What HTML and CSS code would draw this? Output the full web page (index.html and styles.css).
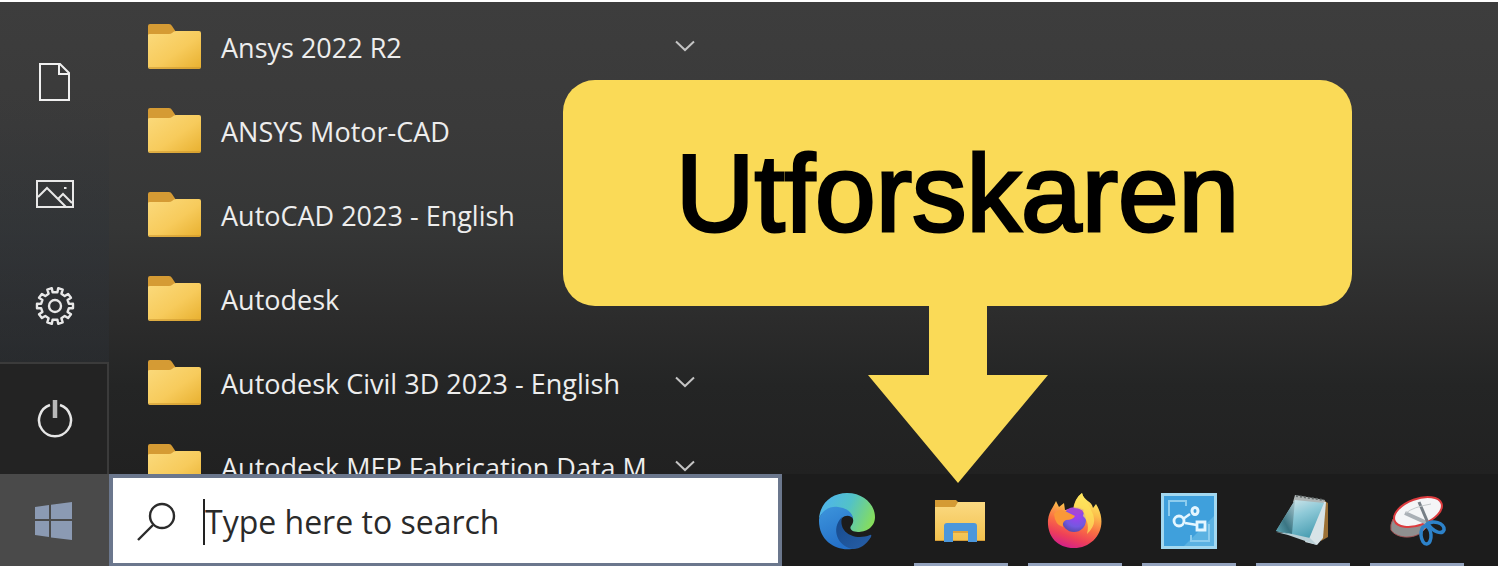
FILE: index.html
```
<!DOCTYPE html>
<html lang="sv">
<head>
<meta charset="utf-8">
<title>Utforskaren</title>
<link rel="stylesheet" href="styles.css">
</head>
<body>
<svg class="defs" aria-hidden="true">
  <defs>
    <linearGradient id="folderFace" x1="0" y1="0" x2="1" y2="1">
      <stop offset="0" stop-color="#fbda7c"/><stop offset=".55" stop-color="#f7cb5c"/><stop offset="1" stop-color="#e8b02f"/>
    </linearGradient>
    <symbol id="folder" viewBox="0 0 53 45">
      <path d="M2 0H21Q23 0 24 2L28 8V20H0V2Q0 0 2 0Z" fill="#d59b34"/>
      <path d="M0 11Q0 10 2 10H21Q23 10 24 9L26 7.500Q27 7 28 7H51Q53 7 53 9V43Q53 45 51 45H2Q0 45 0 43Z" fill="url(#folderFace)"/>
      <path d="M1 44H52" stroke="#c8922c" stroke-width="1.200"/>
    </symbol>
    <symbol id="chevron" viewBox="0 0 20 12">
      <path d="M1 1.500L10 10L19 1.500" fill="none" stroke="#c4c4c4" stroke-width="2"/>
    </symbol>
  </defs>
</svg>

<main class="desktop">
  <section class="menu">
    <nav class="rail" aria-label="Start">
      <button class="rail-item" aria-label="Documents">
        <svg width="40" height="40" viewBox="0 0 40 40" fill="none" stroke="#f0f0f0" stroke-width="2">
          <path d="M5 2H25L34 11V38H5Z"/><path d="M24 2V12H34"/>
        </svg>
      </button>
      <button class="rail-item" aria-label="Pictures">
        <svg width="40" height="40" viewBox="0 0 40 40" fill="none" stroke="#e8e8e8" stroke-width="2">
          <path d="M2 7H38V33H2Z"/><path d="M3 23L12 14L31 33M23 25L28 20L37 29"/><path d="M29 14H31.500"/>
        </svg>
      </button>
      <button class="rail-item" aria-label="Settings">
        <svg width="40" height="40" viewBox="0 0 40 40" fill="none" stroke="#e8e8e8" stroke-width="2.400" stroke-linejoin="round">
          <path d="M17.600 6.200L16.800 2.200L12.300 3.700L13.600 7.700L10.300 10.100L6.900 7.900L4 11.800L7.400 14.100L6.100 17.900L2 17.700V22.300L6.100 22.100L7.400 25.900L4 28.200L6.900 32.100L10.300 29.900L13.600 32.300L12.300 36.300L16.800 37.800L17.600 33.800H22.400L23.200 37.800L27.700 36.300L26.400 32.300L29.700 29.900L33.100 32.100L36 28.200L32.600 25.900L33.900 22.100L38 22.300V17.700L33.900 17.900L32.600 14.100L36 11.800L33.100 7.900L29.700 10.100L26.400 7.700L27.700 3.700L23.200 2.200L22.400 6.200Z"/>
          <circle cx="20" cy="20" r="6"/>
        </svg>
      </button>
      <button class="rail-item rail-power" aria-label="Power">
        <svg width="40" height="40" viewBox="0 0 40 40" fill="none" stroke="#e6e6e6" stroke-width="2.500">
          <path d="M16 6A16 16 0 1 0 26 6"/><path d="M21 1V19" stroke="#b8b8b8" stroke-width="4.500"/>
        </svg>
      </button>
    </nav>
    <ul class="apps">
      <li><button class="app"><svg class="app-icon"><use href="#folder"/></svg><span>Ansys 2022 R2</span><svg class="chevron"><use href="#chevron"/></svg></button></li>
      <li><button class="app"><svg class="app-icon"><use href="#folder"/></svg><span>ANSYS Motor-CAD</span></button></li>
      <li><button class="app"><svg class="app-icon"><use href="#folder"/></svg><span>AutoCAD 2023 - English</span></button></li>
      <li><button class="app"><svg class="app-icon"><use href="#folder"/></svg><span>Autodesk</span></button></li>
      <li><button class="app"><svg class="app-icon"><use href="#folder"/></svg><span>Autodesk Civil 3D 2023 - English</span><svg class="chevron"><use href="#chevron"/></svg></button></li>
      <li><button class="app"><svg class="app-icon"><use href="#folder"/></svg><span>Autodesk MEP Fabrication Data M</span><svg class="chevron"><use href="#chevron"/></svg></button></li>
    </ul>
  </section>

  <footer class="taskbar">
    <button class="start" aria-label="Start">
      <svg width="40" height="40" viewBox="0 0 40 40" fill="#8b9ab3">
        <path d="M0 6L14 4V18H0ZM16 3.700L37 1V18H16ZM0 20H14V36L0 34ZM16 20H37V39L16 36.500Z"/>
      </svg>
    </button>
    <label class="search">
      <svg width="40" height="40" viewBox="0 0 40 40" fill="none" stroke="#2b2b2b" stroke-width="2.400">
        <circle cx="26" cy="14" r="12"/><path d="M17 23L2 38"/>
      </svg>
      <span class="caret"></span>
      <input type="text" placeholder="Type here to search" aria-label="Type here to search">
    </label>
    <div class="tasks">
      <button class="task" aria-label="Edge">
        <svg width="58" height="58" viewBox="0 0 58 58">
          <defs>
            <linearGradient id="edgeTop" x1="0" y1=".3" x2="1" y2=".6"><stop offset="0" stop-color="#4fb3ee"/><stop offset=".5" stop-color="#52c2c8"/><stop offset="1" stop-color="#86dd5c"/></linearGradient>
            <linearGradient id="edgeLeft" x1="0" y1="0" x2=".4" y2="1"><stop offset="0" stop-color="#3d95dc"/><stop offset="1" stop-color="#2470c8"/></linearGradient>
            <linearGradient id="edgeLow" x1="0" y1="0" x2="1" y2="1"><stop offset="0" stop-color="#164a8c"/><stop offset="1" stop-color="#275fa8"/></linearGradient>
          </defs>
          <path d="M1 27C2 11 14 1 29 1C46 1 57 13 57 25C57 36 47 40 40 40C34 40 31 37 33 34C39 27 32 18 22 17C12 15 4 19 1 27Z" fill="url(#edgeTop)"/>
          <path d="M1 27C4 18 12 14 20 15C29 16 35 21 35 27C34 24 28 22 24 26C16 36 22 55 38 56C23 61 0 52 1 27Z" fill="url(#edgeLeft)"/>
          <path d="M24 25C20 41 37 49 52 43Q54 42 53 45C48 53 42 57 35 57C20 55 12 37 24 25Z" fill="url(#edgeLow)"/>
        </svg>
      </button>
      <button class="task open" aria-label="Utforskaren">
        <svg width="58" height="58" viewBox="0 0 58 58">
          <defs><linearGradient id="explorerFace" x1="0" y1="0" x2="0" y2="1"><stop offset="0" stop-color="#fbda82"/><stop offset="1" stop-color="#f2c14e"/></linearGradient></defs>
          <path d="M3 8H24L27 11V20H3Z" fill="#d59b34"/>
          <path d="M3 15H23L26 10H53V49H3Z" fill="url(#explorerFace)"/>
          <path d="M3 48.500H53" stroke="#d29c38"/>
          <path d="M12 34Q12 31 15 31H42Q45 31 45 34V50H36V39H21V50H12Z" fill="#4c97dc"/>
          <path d="M21 39H36V41H21Z" fill="#dfa43c"/>
        </svg>
      </button>
      <button class="task open" aria-label="Firefox">
        <svg width="58" height="58" viewBox="0 0 58 58">
          <defs>
            <linearGradient id="foxBody" x1=".7" y1="0" x2=".35" y2="1"><stop offset="0" stop-color="#fff36a"/><stop offset=".3" stop-color="#fcc14c"/><stop offset=".58" stop-color="#fa7043"/><stop offset=".8" stop-color="#ee4058"/><stop offset="1" stop-color="#d3208a"/></linearGradient>
            <radialGradient id="foxGlobe" cx=".6" cy=".3" r=".8"><stop offset="0" stop-color="#a63df0"/><stop offset=".6" stop-color="#7458e0"/><stop offset="1" stop-color="#4c469e"/></radialGradient>
          </defs>
          <path d="M10 9L13 15L18 11L19 18L27 17Q29 6 36 1C38 9 46 9 47 16L50 12C64 34 49 56 28 56C10 56 1 43 2 28C3 19 7 16 10 9Z" fill="url(#foxBody)"/>
          <circle cx="28" cy="28" r="12" fill="url(#foxGlobe)"/>
          <path d="M20 18Q29 12 38 18L35 22Q29 24 20 18Z" fill="#a448d6"/>
          <path d="M8 22Q14 15 21 20L29 24Q27 28 20 28Q16 30 17 35Q9 33 8 22Z" fill="#fa9838"/>
          <path d="M28 16Q29 6 36 1C38 9 43 11 45 18Q53 31 41 42Q44 30 37 24L38 20Q34 16 28 16Z" fill="#fde35b" opacity=".75"/>
        </svg>
      </button>
      <button class="task open" aria-label="Share">
        <svg width="58" height="58" viewBox="0 0 58 58" fill="none">
          <rect x="1" y="1" width="56" height="56" fill="#a2d8f0"/>
          <rect x="4" y="4" width="50" height="50" fill="#3fa0dc"/>
          <path d="M54 24V54H24Z" fill="#5bb2e2"/>
          <path d="M9 24V9H26V14M49 32V49H31V43" stroke="#8dcdee" stroke-width="2"/>
          <path d="M23 27L30 22M25 31L37 33" stroke="#e4f6ff" stroke-width="2.500"/>
          <circle cx="19" cy="29" r="5" stroke="#e4f6ff" stroke-width="2.800"/>
          <ellipse cx="35" cy="19" rx="3" ry="3.500" stroke="#e4f6ff" stroke-width="3"/>
          <path d="M37 30H45V38H37Z" stroke="#e4f6ff" stroke-width="2.800"/>
        </svg>
      </button>
      <button class="task open" aria-label="Notepad">
        <svg width="58" height="58" viewBox="0 0 58 58">
          <defs>
            <linearGradient id="notePage" x1=".1" y1="0" x2=".6" y2="1"><stop offset="0" stop-color="#dbe9ec"/><stop offset=".45" stop-color="#8fcad8"/><stop offset="1" stop-color="#4a9eb2"/></linearGradient>
            <linearGradient id="noteShade" x1="1" y1="0" x2="0" y2="1"><stop offset="0" stop-color="#a8c6cd"/><stop offset=".6" stop-color="#2e6876"/><stop offset="1" stop-color="#5ba4b2"/></linearGradient>
          </defs>
          <path d="M49 8L54 11V45L47 49Z" fill="#9b7035"/>
          <path d="M49 9L52 10L49 46L43 53L31 50Z" fill="#d8e3e7"/>
          <path d="M21 3L51 8L48 14L19 10Z" fill="#aeb5b5"/>
          <path d="M21 8L50 11L35 47L2 39Z" fill="url(#notePage)"/>
          <path d="M21 8L18 42L2 39Z" fill="url(#noteShade)" opacity=".85"/>
          <path d="M2 40L14 43L34 50L43 53L36 46L18 42Z" fill="#b9d0d7"/>
          <path d="M22 4L50 8" stroke="#636b6b" stroke-width="2" stroke-dasharray="2 2"/>
        </svg>
      </button>
      <button class="task open" aria-label="Snipping tool">
        <svg width="58" height="58" viewBox="0 0 58 58" fill="none">
          <path d="M5 27Q2 33 3 38C9 47 26 47 34 40L45 29Z" fill="#8f8f8f" stroke="#a75658"/>
          <ellipse cx="30" cy="20" rx="25" ry="13" transform="rotate(-20 30 20)" fill="#f4f5f7" stroke="#dd3b3e" stroke-width="2"/>
          <path d="M17 21L39 31" stroke="#aab0b6" stroke-width="4"/>
          <path d="M31 10L40 31" stroke="#777f87" stroke-width="3"/>
          <path d="M18 21Q25 15 43 12" stroke="#c5cacc"/>
          <path d="M38 33C44 27 57 31 56 38C54 43 45 40 40 32" stroke="#2d82c9" stroke-width="3.500"/>
          <ellipse cx="38" cy="43" rx="5" ry="9" stroke="#2d82c9" stroke-width="3.500" transform="rotate(-5 38 43)"/>
        </svg>
      </button>
    </div>
  </footer>

  <aside class="callout">
    <p class="callout-label">Utforskaren</p>
    <svg class="callout-arrow" width="180" height="177" viewBox="0 0 180 177" aria-hidden="true">
      <path d="M61 0H119V69H180L90 177L0 69H61Z" fill="#fada57"/>
    </svg>
  </aside>
</main>
</body>
</html>
```
FILE: styles.css
```
* { box-sizing: border-box; }

body {
  margin: 0;
  background: #fff;
  font-family: "Open Sans", "Noto Sans", sans-serif;
}

button {
  margin: 0;
  padding: 0;
  border: 0;
  background: none;
  color: inherit;
  font: inherit;
}

svg { display: block; flex: none; }

.defs { position: absolute; width: 0; height: 0; }

.desktop {
  position: relative;
  display: grid;
  grid-template-rows: minmax(0, 1fr) 92px;
  height: 100vh;
  overflow: hidden;
  border-top: 2px solid #fff;
  background: linear-gradient(#3d3d3d 0%, #3a3a3a 22%, #353636 40%, #2c2c2c 56%, #242525 68%, #212121 84%);
}

.menu {
  display: flex;
  min-height: 0;
  overflow: hidden;
}

.rail {
  display: flex;
  flex: none;
  flex-direction: column;
  justify-content: flex-end;
  width: 109px;
  background: linear-gradient(rgba(44, 50, 58, 0) 20%, rgba(44, 50, 58, .35) 50%, rgba(44, 50, 58, .35) 76%, rgba(44, 50, 58, 0) 80%);
}

.rail-item {
  display: grid;
  place-items: center;
  height: 112px;
}

.rail-power {
  border: solid #3b3b3b;
  border-width: 2px 2px 0 0;
  background: #232323;
}

.apps {
  flex: 0 1 586px;
  margin: 0;
  padding: 4px 0 0 39px;
  list-style: none;
}

.app {
  display: flex;
  align-items: center;
  gap: 20px;
  width: 100%;
  height: 84px;
  color: #ededed;
  font-size: 27px;
  line-height: 36px;
  text-align: left;
  white-space: nowrap;
}

.app-icon {
  width: 53px;
  height: 45px;
  margin-bottom: 4px;
}

.chevron {
  width: 20px;
  height: 12px;
  margin-bottom: 4px;
  margin-left: auto;
}

.taskbar {
  display: flex;
  background: #1c1c1c;
}

.start {
  display: grid;
  flex: none;
  place-items: center;
  width: 109px;
  padding-top: 2px;
  background: #4a4a4a;
}

.search {
  display: flex;
  flex: 0 1 673px;
  align-items: center;
  padding: 2px 20px 0 23px;
  border: 4px solid #6b778d;
  border-bottom-width: 3px;
  background: #fff;
}

.caret {
  width: 2px;
  height: 46px;
  margin-left: 27px;
  background: #222;
}

.search input {
  flex: 1;
  min-width: 0;
  padding: 0;
  border: 0;
  outline: 0;
  background: none;
  font: 32px/40px "Open Sans", "Noto Sans", sans-serif;
}

.search input::placeholder { color: #2a2a2a; opacity: 1; }

.tasks {
  display: flex;
  padding-left: 8px;
}

.task {
  display: grid;
  place-items: center;
  width: 94px;
  margin: 0 10px;
  padding-top: 4px;
  border-bottom: 3px solid transparent;
}

.task.open { border-bottom-color: #93a2bd; }

.callout {
  position: absolute;
  top: 78px;
  left: 563px;
  display: flex;
  flex-direction: column;
  align-items: center;
  width: 789px;
}

.callout-label {
  width: 100%;
  margin: 0;
  padding: 48px 0;
  border-radius: 32px;
  background: #fada57;
  color: #000;
  font: 109px/130px "Liberation Sans", Arial, sans-serif;
  text-align: center;
  -webkit-text-stroke: 3px #000;
}
```
